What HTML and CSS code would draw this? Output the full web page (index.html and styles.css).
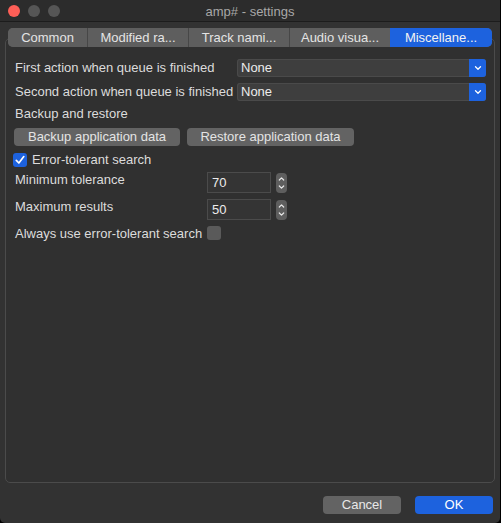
FILE: index.html
```html
<!DOCTYPE html>
<html>
<head>
<meta charset="utf-8">
<link rel="stylesheet" href="styles.css">
</head>
<body>
<div class="window">
  <div class="titlebar">
    <div class="lights">
      <span class="light red"></span>
      <span class="light gray"></span>
      <span class="light gray"></span>
    </div>
    <div class="title">amp# - settings</div>
  </div>
  <div class="body">
    <div class="tabs">
      <div class="tab first">Common</div>
      <div class="tab">Modified ra...</div>
      <div class="tab">Track nami...</div>
      <div class="tab">Audio visua...</div>
      <div class="tab active">Miscellane...</div>
    </div>
    <div class="panel">
      <div class="combos">
        <div class="label">First action when queue is finished</div>
        <div class="combo"><span class="combo-text">None</span><span class="combo-arrow"><svg width="8" height="6" viewBox="0 0 8 6"><path d="M1.5 1.8 L4 4.2 L6.5 1.8" fill="none" stroke="#fff" stroke-width="1.3" stroke-linecap="round" stroke-linejoin="round"/></svg></span></div>
        <div class="label">Second action when queue is finished</div>
        <div class="combo"><span class="combo-text">None</span><span class="combo-arrow"><svg width="8" height="6" viewBox="0 0 8 6"><path d="M1.5 1.8 L4 4.2 L6.5 1.8" fill="none" stroke="#fff" stroke-width="1.3" stroke-linecap="round" stroke-linejoin="round"/></svg></span></div>
      </div>
      <div class="label section">Backup and restore</div>
      <div class="buttons">
        <div class="btn backup">Backup application data</div>
        <div class="btn restore">Restore application data</div>
      </div>
      <div class="check-row">
        <span class="checkbox checked"><svg width="14" height="14" viewBox="0 0 14 14"><path d="M3.3 7.3 L5.9 10 L10.8 3.6" fill="none" stroke="#fff" stroke-width="1.7" stroke-linecap="round" stroke-linejoin="round"/></svg></span>
        <span class="label">Error-tolerant search</span>
      </div>
      <div class="grid">
        <div class="label">Minimum tolerance</div>
        <div class="field">
          <div class="input">70</div>
          <div class="spinner"><svg width="11" height="20" viewBox="0 0 11 20"><path d="M3.3 7 L5.5 4.8 L7.7 7 M3.3 13 L5.5 15.2 L7.7 13" fill="none" stroke="#e8e8e8" stroke-width="1.2" stroke-linecap="round" stroke-linejoin="round"/></svg></div>
        </div>
        <div class="label">Maximum results</div>
        <div class="field">
          <div class="input">50</div>
          <div class="spinner"><svg width="11" height="20" viewBox="0 0 11 20"><path d="M3.3 7 L5.5 4.8 L7.7 7 M3.3 13 L5.5 15.2 L7.7 13" fill="none" stroke="#e8e8e8" stroke-width="1.2" stroke-linecap="round" stroke-linejoin="round"/></svg></div>
        </div>
        <div class="label">Always use error-tolerant search</div>
        <div class="field"><span class="checkbox"></span></div>
      </div>
    </div>
    <div class="footer">
      <div class="fbtn cancel">Cancel</div>
      <div class="fbtn ok">OK</div>
    </div>
  </div>
</div>
</body>
</html>
```
FILE: styles.css
```css
html, body {
  margin: 0;
  padding: 0;
  background: #000;
}
body {
  width: 501px;
  height: 523px;
  overflow: hidden;
  font-family: "Liberation Sans", Arial, sans-serif;
  font-size: 13px;
  color: #dedede;
}
.window {
  width: 500px;
  height: 523px;
  background: #323232;
  border-radius: 0 0 5px 5px;
  display: flex;
  flex-direction: column;
  box-sizing: border-box;
}
.titlebar {
  height: 22px;
  background: #2c2c2c;
  border-bottom: 1px solid #1c1c1c;
  box-sizing: border-box;
  display: flex;
  align-items: center;
  position: relative;
}
.lights {
  display: flex;
  gap: 8px;
  padding-left: 8px;
}
.light {
  width: 12px;
  height: 12px;
  border-radius: 50%;
}
.light.red { background: #fe5f57; }
.light.gray { background: #565656; }
.title {
  position: absolute;
  left: 0;
  right: 0;
  top: 1px;
  text-align: center;
  color: #a8a8a8;
  line-height: 22px;
}
.body {
  flex: 1;
  display: flex;
  flex-direction: column;
  padding: 6px 0 0;
}
.tabs {
  display: flex;
  margin: 0 8px;
  height: 19px;
  border-radius: 5px;
  overflow: hidden;
  position: relative;
  z-index: 1;
  background: #5c5c5c;
}
.tab {
  width: 100px;
  flex: 0 0 auto;
  text-align: center;
  line-height: 19px;
  color: #e4e4e4;
  border-left: 1px solid #474747;
  background: #5e5e5e;
}
.tab.first {
  width: 79px;
  border-left: none;
}
.tab.active {
  background: #1d62de;
  color: #f2f2f2;
  flex: 1;
  border-left: none;
}
.panel {
  margin: -9px 5px 0;
  height: 445px;
  box-sizing: border-box;
  border: 1px solid #4b4b4b;
  border-radius: 5px;
  background: #303030;
  padding: 20px 8px 0 9px;
  display: flex;
  flex-direction: column;
}
.label {
  line-height: 16px;
  color: #dcdcdc;
  white-space: nowrap;
}
.combos {
  display: grid;
  grid-template-columns: 222px 1fr;
  row-gap: 6px;
  align-items: center;
}
.combo {
  height: 18px;
  display: flex;
  background: #3e3e3e;
  border-radius: 3px;
  box-shadow: inset 0 0 0 1px #4a4a4a;
  overflow: hidden;
}
.combo-text {
  flex: 1;
  padding-left: 4px;
  line-height: 18px;
  color: #ececec;
}
.combo-arrow {
  width: 17px;
  background: #1d62de;
  display: flex;
  align-items: center;
  justify-content: center;
}
.section {
  margin-top: 5px;
}
.buttons {
  display: flex;
  gap: 7px;
  margin: 6px 0 0 -1px;
}
.btn {
  height: 18px;
  line-height: 18px;
  background: #636363;
  border-radius: 4px;
  text-align: center;
  color: #e4e4e4;
}
.btn.backup { width: 166px; }
.btn.restore { width: 167px; }
.check-row {
  display: flex;
  align-items: center;
  gap: 5px;
  margin: 6px 0 0 -2px;
}
.checkbox {
  width: 14px;
  height: 14px;
  border-radius: 3px;
  background: #5a5a5a;
  display: inline-flex;
}
.checkbox.checked {
  background: #1d62de;
}
.grid {
  display: grid;
  grid-template-columns: 192px auto;
  margin-top: 4px;
  row-gap: 6px;
  align-items: start;
}
.field {
  display: flex;
  align-items: center;
  gap: 5px;
}
.input {
  width: 64px;
  height: 21px;
  box-sizing: border-box;
  border: 1px solid #4b4b4b;
  background: #343434;
  padding-left: 4px;
  line-height: 19px;
  color: #ececec;
}
.spinner {
  width: 11px;
  height: 20px;
  background: #5e5e5e;
  border-radius: 4px;
  display: flex;
}
.footer {
  display: flex;
  justify-content: flex-end;
  gap: 14px;
  padding: 13px 7px 0 0;
}
.fbtn {
  width: 78px;
  height: 18px;
  line-height: 18px;
  border-radius: 4px;
  text-align: center;
  color: #e8e8e8;
}
.fbtn.cancel { background: #636363; }
.fbtn.ok { background: #1d62de; color: #fff; }
```
